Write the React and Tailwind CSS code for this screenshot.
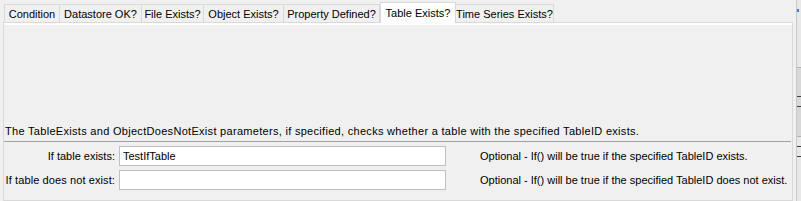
import React from "react";

const tabs = [
  { label: "Condition", w: 55 },
  { label: "Datastore OK?", w: 82 },
  { label: "File Exists?", w: 62 },
  { label: "Object Exists?", w: 80 },
  { label: "Property Defined?", w: 96 },
  { label: "Table Exists?", w: 75, selected: true },
  { label: "Time Series Exists?", w: 98 },
];

export default function App() {
  return (
    <div
      className="w-[801px] h-[201px] bg-[#f0f0f0] flex overflow-hidden text-[11px] text-black"
      style={{ fontFamily: '"Liberation Sans", Arial, sans-serif' }}
    >
      <div className="w-[796px] flex flex-col pl-[3px] pt-[2px]">
        <div className="flex h-[20px] pl-[1px] items-end">
          {tabs.map((t, i) =>
            t.selected ? (
              <div
                key={t.label}
                className="relative z-10 h-[21px] -mb-[1px] bg-white border-t border-l border-r border-[#d9d9d9] flex items-start justify-center pt-[3px] leading-[14px] shrink-0"
                style={{ width: t.w + 1 }}
              >
                {t.label}
              </div>
            ) : (
              <div
                key={t.label}
                className={`h-[18px] border-t border-r border-[#d9d9d9] ${i === 0 ? "border-l" : ""} flex items-center justify-center leading-[14px] shrink-0`}
                style={{ width: i === 0 ? t.w + 1 : t.w }}
              >
                {t.label}
              </div>
            )
          )}
        </div>
        <div className="w-[790px] flex-1 border border-[#d9d9d9] shadow-[inset_0_2px_0_#ffffff] flex flex-col pt-[101px]">
          <div className="pl-[1px] leading-[14px] h-[14px] whitespace-nowrap tracking-[0.3px]">
            The TableExists and ObjectDoesNotExist parameters, if specified, checks whether a table with the specified TableID exists.
          </div>
          <div className="mt-[3px] h-px bg-[#a0a0a0] mr-[1px]" />
          <div className="mt-[4px] grid grid-cols-[112px_327px_auto] gap-x-0 gap-y-[4px] items-center">
            <div className="text-right pr-[1px] leading-[14px] whitespace-nowrap">If table exists:</div>
            <div className="ml-[3px] h-[20px] bg-white border border-[#c0c0c0] flex items-center px-[3px] leading-[14px] w-[327px]">
              TestIfTable
            </div>
            <div className="pl-[37px] leading-[14px] whitespace-nowrap">
              Optional - If() will be true if the specified TableID exists.
            </div>
            <div className="text-right pr-[1px] leading-[14px] whitespace-nowrap tracking-[0.1px]">If table does not exist:</div>
            <div className="ml-[3px] h-[20px] bg-white border border-[#c0c0c0] w-[327px]" />
            <div className="pl-[37px] leading-[14px] whitespace-nowrap">
              Optional - If() will be true if the specified TableID does not exist.
            </div>
          </div>
        </div>
      </div>
      <div className="w-[5px] flex flex-col border-l border-[#c8c8c8] bg-[#e8e8e8]">
        <div className="h-[9px]" />
        <div className="h-[3px] w-[2px] bg-[#3a7bd5]" />
        <div className="h-[55px]" />
        <div className="h-[29px] border-t border-[#b0b0b0] bg-[#d8d8d8]" />
        <div className="h-[10px] border-t border-[#404040] bg-[#d8d8d8]" />
        <div className="h-[30px] border-t border-[#404040] bg-[#d8d8d8]" />
        <div className="h-[10px] border-t border-[#b0b0b0]" />
        <div className="h-[10px] border-t border-[#404040]" />
        <div className="flex-1 border-t border-[#404040]" />
      </div>
    </div>
  );
}
